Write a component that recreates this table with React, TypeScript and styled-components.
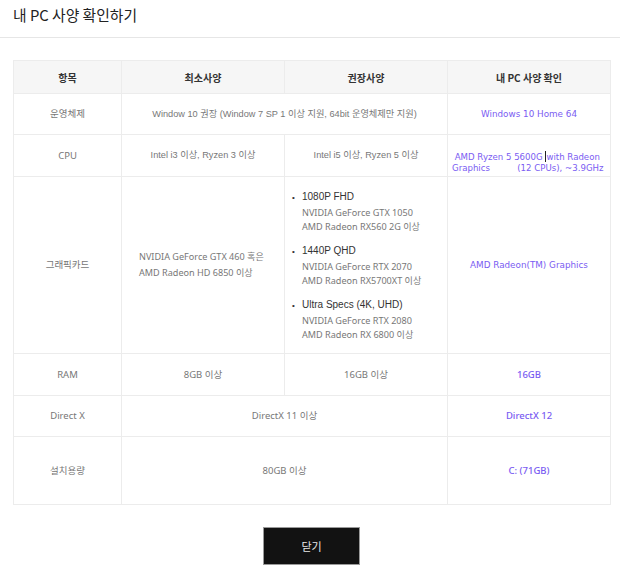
import React from "react";
import styled, { createGlobalStyle } from "styled-components";

const Global = createGlobalStyle`
  html, body { margin: 0; padding: 0; background: #fff; }
  body { font-family: "Liberation Sans", "Noto Sans CJK KR", sans-serif; }
`;

const Page = styled.div`
  width: 620px;
  height: 581px;
  display: flex;
  flex-direction: column;
  background: #fff;
`;

const Header = styled.header`
  height: 38px;
  box-sizing: border-box;
  border-bottom: 1px solid #e6e6e6;
  padding: 5px 0 0 13px;
`;

const Title = styled.h1`
  margin: 0;
  font-family: "Noto Sans CJK KR", sans-serif;
  font-size: 14.8px;
  font-weight: 400;
  color: #222;
  line-height: 20px;
`;

const Body = styled.div`
  padding: 22px 10px 0 13px;
  display: flex;
  flex-direction: column;
  align-items: flex-start;
`;

const Table = styled.table`
  border-collapse: collapse;
  table-layout: fixed;
  width: 597px;
`;

const Col = styled.col<{ $w: number }>`
  width: ${(p) => p.$w}px;
`;

const Th = styled.th`
  height: 32px;
  padding: 0;
  background: #f6f6f6;
  border: 1px solid #ececec;
  font-family: "Noto Sans CJK KR", sans-serif;
  font-size: 10px;
  font-weight: 700;
  color: #333;
  text-align: center;
  vertical-align: middle;
`;

const Td = styled.td<{ $h?: number; $align?: "left" | "center"; $pl?: number; $pr?: number }>`
  height: ${(p) => (p.$h ? `${p.$h}px` : "auto")};
  padding: 0 ${(p) => p.$pr ?? 4}px 0 ${(p) => p.$pl ?? 4}px;
  border: 1px solid #ececec;
  font-family: "Liberation Sans", "Noto Sans CJK KR", sans-serif;
  font-size: 9.2px;
  color: #777;
  text-align: ${(p) => p.$align ?? "center"};
  vertical-align: middle;
  line-height: 15px;
`;

const Soft = styled.span<{ $size?: number }>`
  font-family: "Noto Sans", "Noto Sans CJK KR", sans-serif;
  font-size: ${(p) => p.$size ?? 9.5}px;
  color: #777;
`;

const Mine = styled.span<{ $wide?: boolean }>`
  font-family: ${(p) =>
    p.$wide ? `"DejaVu Sans", "Noto Sans CJK KR", sans-serif` : `"Noto Sans", sans-serif`};
  font-size: ${(p) => (p.$wide ? 8.8 : 9.5)}px;
  color: #7a5cf2;
  font-weight: 500;
`;

const CpuBox = styled.div`
  font-family: "DejaVu Sans", sans-serif;
  font-size: 8.6px;
  color: #7a5cf2;
  line-height: 11px;
  white-space: pre;
  text-align: left;
  padding-top: 13px;
`;

const Caret = styled.span`
  display: inline-block;
  width: 1px;
  height: 11px;
  background: #222;
  vertical-align: -2px;
`;

const SpecList = styled.ul`
  list-style: none;
  margin: 0;
  padding: 0;
  display: flex;
  flex-direction: column;
  gap: 9px;
  text-align: left;
`;

const SpecItem = styled.li`
  display: flex;
  flex-direction: column;
`;

const SpecLabel = styled.div`
  font-family: "Liberation Sans", sans-serif;
  font-size: 10px;
  color: #333;
  line-height: 16px;
  &::before {
    content: "•";
    display: inline-block;
    width: 10px;
    font-size: 8px;
    padding-left: 3px;
  }
`;

const SpecLine = styled.div`
  padding-left: 13px;
  font-family: "Noto Sans", "Noto Sans CJK KR", sans-serif;
  font-size: 9.1px;
  color: #777;
  line-height: 14px;
`;

const Footer = styled.div`
  align-self: stretch;
  display: flex;
  justify-content: center;
  padding-top: 22px;
`;

const CloseButton = styled.button`
  width: 97px;
  height: 38px;
  background: #121212;
  border: 1px solid #9a9a9a;
  color: #e8e8e8;
  font-family: "Noto Sans CJK KR", sans-serif;
  font-size: 11px;
  cursor: pointer;
`;

const specs = [
  { label: "1080P FHD", lines: ["NVIDIA GeForce GTX 1050", "AMD Radeon RX560 2G 이상"] },
  { label: "1440P QHD", lines: ["NVIDIA GeForce RTX 2070", "AMD Radeon RX5700XT 이상"] },
  { label: "Ultra Specs (4K, UHD)", lines: ["NVIDIA GeForce RTX 2080", "AMD Radeon RX 6800 이상"] },
];

export default function App() {
  return (
    <Page>
      <Global />
      <Header>
        <Title>내 PC 사양 확인하기</Title>
      </Header>
      <Body>
        <Table>
          <colgroup>
            <Col $w={108} />
            <Col $w={163} />
            <Col $w={163} />
            <Col $w={163} />
          </colgroup>
          <thead>
            <tr>
              <Th>항목</Th>
              <Th>최소사양</Th>
              <Th>권장사양</Th>
              <Th>내 PC 사양 확인</Th>
            </tr>
          </thead>
          <tbody>
            <tr>
              <Td $h={40}><Soft>운영체제</Soft></Td>
              <Td colSpan={2}>Window 10 권장 (Window 7 SP 1 이상 지원, 64bit 운영체제만 지원)</Td>
              <Td><Mine $wide>Windows 10 Home 64</Mine></Td>
            </tr>
            <tr>
              <Td $h={41}><Soft>CPU</Soft></Td>
              <Td>Intel i3 이상, Ryzen 3 이상</Td>
              <Td>Intel i5 이상, Ryzen 5 이상</Td>
              <Td>
                <CpuBox>
                  {" AMD Ryzen 5 5600G "}
                  <Caret />
                  {"with Radeon\nGraphics          (12 CPUs), ~3.9GHz"}
                </CpuBox>
              </Td>
            </tr>
            <tr>
              <Td $h={176}><Soft>그래픽카드</Soft></Td>
              <Td $align="left" $pl={17} $pr={0}>
                <Soft $size={9.1}>
                  NVIDIA GeForce GTX 460 혹은
                  <br />
                  AMD Radeon HD 6850 이상
                </Soft>
              </Td>
              <Td $align="left">
                <SpecList>
                  {specs.map((s) => (
                    <SpecItem key={s.label}>
                      <SpecLabel>{s.label}</SpecLabel>
                      {s.lines.map((l) => (
                        <SpecLine key={l}>{l}</SpecLine>
                      ))}
                    </SpecItem>
                  ))}
                </SpecList>
              </Td>
              <Td><Mine $wide>AMD Radeon(TM) Graphics</Mine></Td>
            </tr>
            <tr>
              <Td $h={41}><Soft>RAM</Soft></Td>
              <Td><Soft>8GB 이상</Soft></Td>
              <Td><Soft>16GB 이상</Soft></Td>
              <Td><Mine>16GB</Mine></Td>
            </tr>
            <tr>
              <Td $h={40}><Soft>Direct X</Soft></Td>
              <Td colSpan={2}><Soft>DirectX 11 이상</Soft></Td>
              <Td><Mine>DirectX 12</Mine></Td>
            </tr>
            <tr>
              <Td $h={67}><Soft>설치용량</Soft></Td>
              <Td colSpan={2}><Soft>80GB 이상</Soft></Td>
              <Td><Mine>C: (71GB)</Mine></Td>
            </tr>
          </tbody>
        </Table>
        <Footer>
          <CloseButton type="button">닫기</CloseButton>
        </Footer>
      </Body>
    </Page>
  );
}
